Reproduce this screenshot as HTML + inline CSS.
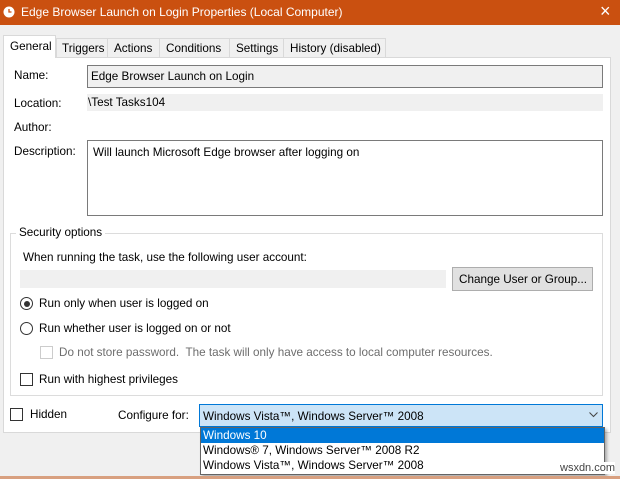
<!DOCTYPE html>
<html><head><style>
*{margin:0;padding:0;box-sizing:border-box}
body{width:620px;height:479px;overflow:hidden;background:#f0f0f0;font-family:"Liberation Sans",sans-serif;font-size:11.7px;color:#000;position:relative}
.a{position:absolute;white-space:nowrap}
</style></head><body>
<div class="a" style="left:0;top:0;width:620px;height:25px;background:#ca5010"></div>
<svg class="a" style="left:3px;top:6px" width="12" height="12"><circle cx="6" cy="6" r="5.5" fill="#fff"/><path d="M6 3V6H8.5" stroke="#ca5010" stroke-width="1.3" fill="none"/></svg>
<div class="a" style="left:21px;top:5px;color:#fff;font-size:12px">Edge Browser Launch on Login Properties (Local Computer)</div>
<div class="a" style="left:600px;top:1px;color:#fff;font-size:18px">×</div>
<div class="a" style="left:3px;top:57px;width:608px;height:376px;background:#fff;border:1px solid #d9d9d9"></div>
<div class="a" style="left:3px;top:35px;width:53px;height:23px;background:#fff;border:1px solid #d9d9d9;border-bottom:none;padding:4px 0 0 6px">General</div>
<div class="a" style="left:56px;top:38px;width:52px;height:19px;border:1px solid #d9d9d9;border-bottom:none;padding:3px 0 0 5px">Triggers</div>
<div class="a" style="left:108px;top:38px;width:52px;height:19px;border:1px solid #d9d9d9;border-left:none;border-bottom:none;padding:3px 0 0 6px">Actions</div>
<div class="a" style="left:160px;top:38px;width:70px;height:19px;border:1px solid #d9d9d9;border-left:none;border-bottom:none;padding:3px 0 0 6px">Conditions</div>
<div class="a" style="left:230px;top:38px;width:54px;height:19px;border:1px solid #d9d9d9;border-left:none;border-bottom:none;padding:3px 0 0 6px">Settings</div>
<div class="a" style="left:284px;top:38px;width:102px;height:19px;border:1px solid #d9d9d9;border-left:none;border-bottom:none;padding:3px 0 0 6px">History (disabled)</div>
<div class="a" style="left:14px;top:69px">Name:</div>
<div class="a" style="left:87px;top:65px;width:516px;height:23px;background:#f0f0f0;border:1px solid #7a7a7a;padding:4px 0 0 3px">Edge Browser Launch on Login</div>
<div class="a" style="left:14px;top:97px">Location:</div>
<div class="a" style="left:87px;top:94px;width:516px;height:17px;background:#f0f0f0;padding:2px 0 0 1px">\Test Tasks104</div>
<div class="a" style="left:14px;top:121px">Author:</div>
<div class="a" style="left:14px;top:145px">Description:</div>
<div class="a" style="left:87px;top:140px;width:516px;height:76px;background:#fff;border:1px solid #7a7a7a;padding:5px 0 0 5px">Will launch Microsoft Edge browser after logging on</div>
<div class="a" style="left:10px;top:233px;width:593px;height:163px;border:1px solid #dcdcdc"></div>
<div class="a" style="left:16px;top:226px;background:#fff;padding:0 3px">Security options</div>
<div class="a" style="left:23px;top:251px">When running the task, use the following user account:</div>
<div class="a" style="left:20px;top:270px;width:426px;height:18px;background:#f0f0f0"></div>
<div class="a" style="left:452px;top:267px;width:141px;height:24px;background:#e1e1e1;border:1px solid #adadad;padding:5px 0 0 6px">Change User or Group...</div>
<div class="a" style="left:20px;top:297px;width:13px;height:13px;border:1px solid #333;border-radius:50%"></div>
<div class="a" style="left:23.5px;top:300.5px;width:6px;height:6px;background:#333;border-radius:50%"></div>
<div class="a" style="left:39px;top:297px">Run only when user is logged on</div>
<div class="a" style="left:20px;top:322px;width:13px;height:13px;border:1px solid #333;border-radius:50%"></div>
<div class="a" style="left:39px;top:322px">Run whether user is logged on or not</div>
<div class="a" style="left:40px;top:346px;width:13px;height:13px;border:1px solid #ccc"></div>
<div class="a" style="left:59px;top:346px;color:#6d6d6d">Do not store password.&nbsp; The task will only have access to local computer resources.</div>
<div class="a" style="left:20px;top:373px;width:13px;height:13px;border:1px solid #333"></div>
<div class="a" style="left:39px;top:373px">Run with highest privileges</div>
<div class="a" style="left:10px;top:408px;width:13px;height:13px;border:1px solid #333"></div>
<div class="a" style="left:30px;top:408px">Hidden</div>
<div class="a" style="left:118px;top:409px">Configure for:</div>
<div class="a" style="left:199px;top:404px;width:404px;height:23px;background:#cce4f7;border:1px solid #0078d7;padding:5px 0 0 3px">Windows Vista™, Windows Server™ 2008</div>
<svg class="a" style="left:589px;top:412px" width="9" height="6"><path d="M0.5 0.5L4.5 4.5L8.5 0.5" stroke="#444" fill="none"/></svg>
<div class="a" style="left:200px;top:427px;width:405px;height:48px;background:#fff;border:1px solid #646464;box-shadow:2px 2px 3px rgba(0,0,0,.3)"></div>
<div class="a" style="left:201px;top:428px;width:403px;height:15px;background:#0078d7;color:#fff;padding:1px 0 0 2px">Windows 10</div>
<div class="a" style="left:203px;top:444px">Windows® 7, Windows Server™ 2008 R2</div>
<div class="a" style="left:203px;top:459px">Windows Vista™, Windows Server™ 2008</div>
<div class="a" style="left:0;top:476px;width:620px;height:3px;background:#d8a080"></div>
<div class="a" style="left:560px;top:462px;color:#444;font-size:11px;background:#fff">wsxdn.com</div>
</body></html>
